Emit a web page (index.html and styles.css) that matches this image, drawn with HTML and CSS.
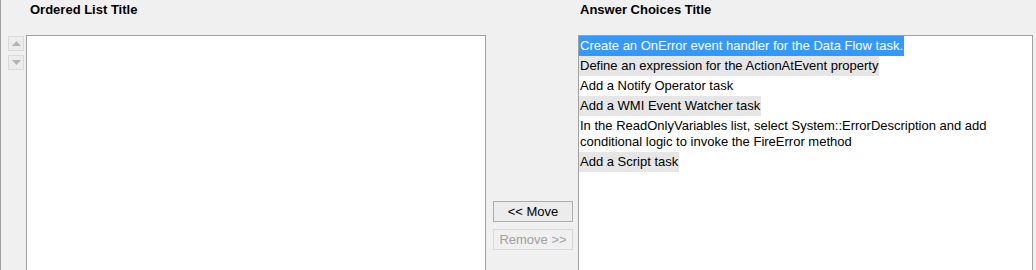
FILE: index.html
```html
<!DOCTYPE html>
<html lang="en">
<head>
  <meta charset="UTF-8">
  <title>Ordering Question</title>
  <link rel="stylesheet" href="styles.css">
</head>
<body>
  <div class="ordering">
    <div class="title-spacer"></div>
    <h2 class="list-title">Ordered List Title</h2>
    <div></div>
    <h2 class="list-title right">Answer Choices Title</h2>

    <div class="arrows">
      <button class="arrow-btn" disabled>
        <svg width="9" height="5" viewBox="0 0 9 5"><path d="M0 5 L4.5 0 L9 5 Z" fill="#b4b4b4"/></svg>
      </button>
      <button class="arrow-btn" disabled>
        <svg width="9" height="5" viewBox="0 0 9 5"><path d="M0 0 L9 0 L4.5 5 Z" fill="#b4b4b4"/></svg>
      </button>
    </div>

    <div class="list-box"></div>

    <div class="actions">
      <button class="action-btn">&lt;&lt; Move</button>
      <button class="action-btn" disabled>Remove &gt;&gt;</button>
    </div>

    <div class="list-box choices">
      <div class="choice selected">Create an OnError event handler for the Data Flow task.</div>
      <div class="choice alt">Define an expression for the ActionAtEvent property</div>
      <div class="choice">Add a Notify Operator task</div>
      <div class="choice alt">Add a WMI Event Watcher task</div>
      <div class="choice">In the ReadOnlyVariables list, select System::ErrorDescription and add conditional logic to invoke the FireError method</div>
      <div class="choice alt">Add a Script task</div>
    </div>
  </div>
</body>
</html>
```

FILE: styles.css
```css
body {
  margin: 0;
  background: #f0f0f0;
  border-left: 1px solid #a0a0a0;
  font-family: Arial, "Liberation Sans", sans-serif;
  height: 270px;
  overflow: hidden;
}
.ordering {
  display: grid;
  grid-template-columns: 25px 460px 92px 455px;
  grid-template-rows: 35px 235px;
}
.list-title {
  margin: 0;
  padding: 2px 0 0 4px;
  font-size: 13px;
  font-weight: bold;
  color: #000;
}
.list-title.right {
  padding-left: 2px;
}
.arrows {
  display: flex;
  flex-direction: column;
  gap: 4px;
  padding: 1px 0 0 7px;
}
.arrow-btn {
  width: 16px;
  height: 15px;
  padding: 0;
  border: 1px solid #dadada;
  background: #ececec;
  display: flex;
  align-items: center;
  justify-content: center;
}
.list-box {
  background: #fff;
  border: 1px solid #a0a0a0;
  border-bottom: none;
}
.actions {
  display: flex;
  flex-direction: column;
  justify-content: flex-end;
  align-items: flex-start;
  gap: 7px;
  padding: 0 0 20px 7px;
}
.action-btn {
  width: 80px;
  height: 21px;
  padding: 0;
  font-family: Arial, "Liberation Sans", sans-serif;
  font-size: 13px;
  color: #000;
  background: #ececec;
  border: 1px solid #adadad;
}
.action-btn:disabled {
  color: #a0a0a0;
  border-color: #d9d9d9;
  background: #f0f0f0;
}
.choices {
  display: flex;
  flex-direction: column;
  align-items: flex-start;
}
.choice {
  font-size: 13px;
  line-height: 16px;
  padding: 2px 1px;
  color: #000;
}
.choice.alt {
  background: #e6e6e6;
}
.choice.selected {
  background: #3399ff;
  color: #fff;
}
```
